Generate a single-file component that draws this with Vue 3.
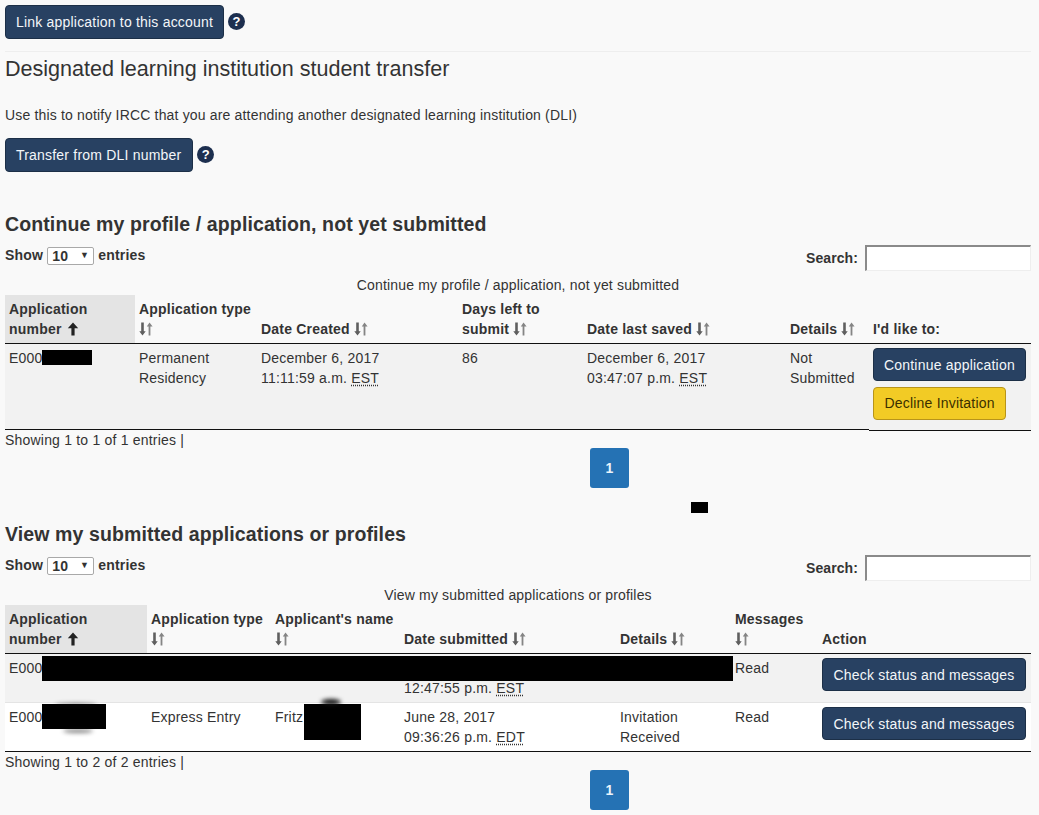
<script setup>
</script>

<template>
  <div class="page">
    <svg class="defs" width="0" height="0" aria-hidden="true">
      <symbol id="sort" viewBox="0 0 14 14">
        <path d="M2.2 .5h2.6v8.7h1.9L3.5 13.6.3 9.2h1.9z" fill="#5f5f5f" />
        <path d="M9.6 13.5V4.6H7.8L10.5.4l3.1 4.2h-2.2v8.9z" fill="#858585" />
      </symbol>
      <symbol id="sorted" viewBox="0 0 14 14">
        <path d="M5.4 13.4V6.2H1.8L7 .4l5.2 5.8H8.6v7.2z" fill="#222" />
      </symbol>
    </svg>

    <div class="action">
      <button class="btn navy">Link application to this account</button>
      <span class="help">?</span>
    </div>
    <hr class="rule" />
    <h2 class="light-title">Designated learning institution student transfer</h2>
    <p class="intro">Use this to notify IRCC that you are attending another designated learning institution (DLI)</p>
    <div class="action">
      <button class="btn navy transfer">Transfer from DLI number</button>
      <span class="help">?</span>
    </div>

    <section class="block first">
      <h2 class="title">Continue my profile / application, not yet submitted</h2>
      <div class="controls">
        <div class="length">
          <span>Show</span>
          <span class="select"><select><option>10</option></select><i>▼</i></span>
          <span>entries</span>
        </div>
        <label class="search">Search: <input type="text" /></label>
      </div>
      <div class="caption">Continue my profile / application, not yet submitted</div>
      <div class="table-wrap">
        <table class="table-one">
          <colgroup>
            <col class="a1" /><col class="a2" /><col class="a3" /><col class="a4" /><col class="a5" /><col class="a6" /><col />
          </colgroup>
          <thead>
            <tr>
              <th class="active">Application number <svg class="ic"><use href="#sorted" /></svg></th>
              <th>Application type <svg class="ic"><use href="#sort" /></svg></th>
              <th>Date Created <svg class="ic"><use href="#sort" /></svg></th>
              <th>Days left to submit <svg class="ic"><use href="#sort" /></svg></th>
              <th>Date last saved <svg class="ic"><use href="#sort" /></svg></th>
              <th>Details <svg class="ic"><use href="#sort" /></svg></th>
              <th>I'd like to:</th>
            </tr>
          </thead>
          <tbody>
            <tr class="odd lined">
              <td>E000</td>
              <td>Permanent Residency</td>
              <td>December 6, 2017<br />11:11:59 a.m. <abbr title="Eastern Standard Time">EST</abbr></td>
              <td>86</td>
              <td>December 6, 2017<br />03:47:07 p.m. <abbr title="Eastern Standard Time">EST</abbr></td>
              <td>Not Submitted</td>
              <td class="buttons">
                <button class="btn navy small">Continue application</button>
                <button class="btn yellow small">Decline Invitation</button>
              </td>
            </tr>
          </tbody>
        </table>
        <div class="redact r1"></div>
      </div>
      <div class="info">Showing 1 to 1 of 1 entries |</div>
      <div class="pager">
        <span class="page-btn">1</span>
        <div class="redact r2"></div>
      </div>
    </section>

    <section class="block second">
      <h2 class="title">View my submitted applications or profiles</h2>
      <div class="controls">
        <div class="length">
          <span>Show</span>
          <span class="select"><select><option>10</option></select><i>▼</i></span>
          <span>entries</span>
        </div>
        <label class="search">Search: <input type="text" /></label>
      </div>
      <div class="caption">View my submitted applications or profiles</div>
      <div class="table-wrap">
        <table class="table-two">
          <colgroup>
            <col class="b1" /><col class="b2" /><col class="b3" /><col class="b4" /><col class="b5" /><col class="b6" /><col />
          </colgroup>
          <thead>
            <tr>
              <th class="active">Application number <svg class="ic"><use href="#sorted" /></svg></th>
              <th>Application type <svg class="ic"><use href="#sort" /></svg></th>
              <th>Applicant's name <svg class="ic"><use href="#sort" /></svg></th>
              <th>Date submitted <svg class="ic"><use href="#sort" /></svg></th>
              <th>Details <svg class="ic"><use href="#sort" /></svg></th>
              <th>Messages <svg class="ic"><use href="#sort" /></svg></th>
              <th>Action</th>
            </tr>
          </thead>
          <tbody>
            <tr class="odd soft">
              <td>E000</td>
              <td></td>
              <td></td>
              <td>&nbsp;<br />12:47:55 p.m. <abbr title="Eastern Standard Time">EST</abbr></td>
              <td></td>
              <td>Read</td>
              <td class="buttons"><button class="btn navy small wide">Check status and messages</button></td>
            </tr>
            <tr class="even lined-all">
              <td>E000</td>
              <td>Express Entry</td>
              <td>Fritz</td>
              <td>June 28, 2017<br />09:36:26 p.m. <abbr title="Eastern Daylight Time">EDT</abbr></td>
              <td>Invitation Received</td>
              <td>Read</td>
              <td class="buttons"><button class="btn navy small wide">Check status and messages</button></td>
            </tr>
          </tbody>
        </table>
        <div class="redact r3"></div>
        <div class="redact r4"></div>
        <div class="redact r5"></div>
        <div class="smudge s1"></div>
        <div class="smudge s2"></div>
        <div class="smudge s3"></div>
      </div>
      <div class="info">Showing 1 to 2 of 2 entries |</div>
      <div class="pager">
        <span class="page-btn">1</span>
      </div>
    </section>
  </div>
</template>

<style scoped>
.page {
  width: 1026px;
  padding: 5px 8px 5px 5px;
  color: #333;
  font-family: "Liberation Sans", Arial, sans-serif;
  font-size: 14px;
  line-height: 20px;
  letter-spacing: 0.2px;
}
.defs { position: absolute; }
.action { display: flex; align-items: center; gap: 4px; }
.btn {
  font: inherit;
  letter-spacing: inherit;
  border-radius: 4px;
  height: 34px;
  padding: 0 10px;
  border: 1px solid #1c2f47;
  cursor: pointer;
  white-space: nowrap;
}
.transfer { padding-right: 11px; }
.navy { background: #284162; color: #f3f6f9; }
.yellow { background: #f2cb25; color: #3a3000; border-color: #b8941a; padding: 0 10.5px 2px; }
.help {
  width: 17px;
  height: 17px;
  border-radius: 50%;
  background: #1d2f4f;
  color: #fff;
  font-weight: 700;
  font-size: 13px;
  line-height: 17px;
  text-align: center;
  margin: -2px 0 0 0;
  letter-spacing: 0;
}
.rule { border: 0; border-top: 1px solid #eee; margin: 12px 0 0; }
.light-title {
  margin: 5px 0 0;
  font-size: 21.56px;
  line-height: 24px;
  font-weight: 400;
  letter-spacing: 0;
}
.intro { margin: 24px 0 0; height: 20px; letter-spacing: 0.17px; }
.intro + .action { margin-top: 13px; }
.title {
  margin: 0;
  font-size: 19.55px;
  line-height: 24px;
  font-weight: 700;
  letter-spacing: 0.1px;
}
.block.first { margin-top: 40px; }
.block.second { margin-top: 28px; position: relative; }
.controls {
  display: flex;
  justify-content: space-between;
  height: 26px;
  margin-top: 9px;
}
.length { display: flex; align-items: center; gap: 4px; height: 18px; margin-top: 1px; font-weight: 700; }
.select { position: relative; display: block; width: 47px; height: 18px; }
.select select {
  appearance: none;
  width: 100%;
  height: 18px;
  padding: 0 0 0 4px;
  border: 1px solid #a9a9a9;
  border-radius: 2px;
  background: #fff;
  color: #333;
  font: 700 14px/16px "Liberation Sans", Arial, sans-serif;
  letter-spacing: 0.2px;
}
.select i {
  position: absolute;
  right: 5px;
  top: 0;
  font-style: normal;
  font-size: 9px;
  line-height: 18px;
  color: #333;
}
.search { display: flex; align-items: center; gap: 7px; font-weight: 700; height: 26px; letter-spacing: 0.1px; }
.search input {
  width: 166px;
  height: 26px;
  box-sizing: border-box;
  background: #fff;
  border-style: solid;
  border-width: 2px 1px 1px 2px;
  border-color: #8a8a8a #eeeeee #eeeeee #8a8a8a;
  padding: 0;
}
.caption { text-align: center; margin-top: 4px; height: 20px; letter-spacing: 0.17px; }
.table-wrap { position: relative; margin-top: 0; }
table {
  width: 1026px;
  table-layout: fixed;
  border-collapse: separate;
  border-spacing: 0;
}
.a1 { width: 130px; } .a2 { width: 122px; } .a3 { width: 201px; }
.a4 { width: 125px; } .a5 { width: 203px; } .a6 { width: 83px; }
.b1 { width: 142px; } .b2 { width: 124px; } .b3 { width: 129px; }
.b4 { width: 216px; } .b5 { width: 115px; } .b6 { width: 87px; }
th {
  padding: 4px;
  text-align: left;
  vertical-align: bottom;
  font-weight: 700;
  border-bottom: 1px solid #111;
  height: 40px;
}
th.active { background: #e4e4e4; }
td {
  padding: 4px;
  vertical-align: top;
}
.odd td { background: #f2f2f2; }
.even td { background: #fff; }
.lined td { height: 78px; box-shadow: inset 0 -1px 0 #111; }
.lined td.buttons { box-shadow: 0 1px 0 #111; }
.soft td { height: 40px; border-bottom: 1px solid #e4e4e4; }
.lined-all td { height: 40px; border-bottom: 1px solid #111; }
.buttons { padding: 4px 5px 0 4px; }
.small { display: block; height: 33px; }
.small + .small { margin-top: 6px; }
.wide { width: 204px; }
.ic { width: 14px; height: 14px; vertical-align: -2px; }
abbr { text-decoration: underline dotted; text-underline-offset: 2px; }
.info { height: 18px; margin-top: 0; }
.pager { position: relative; margin-top: 0; height: 46px; padding-left: 585px; }
.page-btn {
  display: block;
  width: 39px;
  height: 40px;
  background: #2572b4;
  border-radius: 3px;
  color: #eaf4fb;
  font-weight: 700;
  line-height: 40px;
  text-align: center;
}
.redact { position: absolute; background: #000; }
.r1 { left: 37px; top: 55px; width: 50px; height: 15px; }
.r2 { left: 686px; top: 54px; width: 17px; height: 11px; }
.r3 { left: 37px; top: 51px; width: 691px; height: 25px; }
.r4 { left: 37px; top: 99px; width: 64px; height: 25px; }
.r5 { left: 299px; top: 99px; width: 57px; height: 36px; }
.smudge { position: absolute; background: #111; border-radius: 50%; filter: blur(2px); }
.s1 { left: 50px; top: 98px; width: 42px; height: 3px; opacity: 0.5; }
.s2 { left: 58px; top: 124px; width: 30px; height: 4px; opacity: 0.5; }
.s3 { left: 316px; top: 94px; width: 20px; height: 6px; }
</style>

<style>
html, body { background: #f9f9f9; }
</style>
